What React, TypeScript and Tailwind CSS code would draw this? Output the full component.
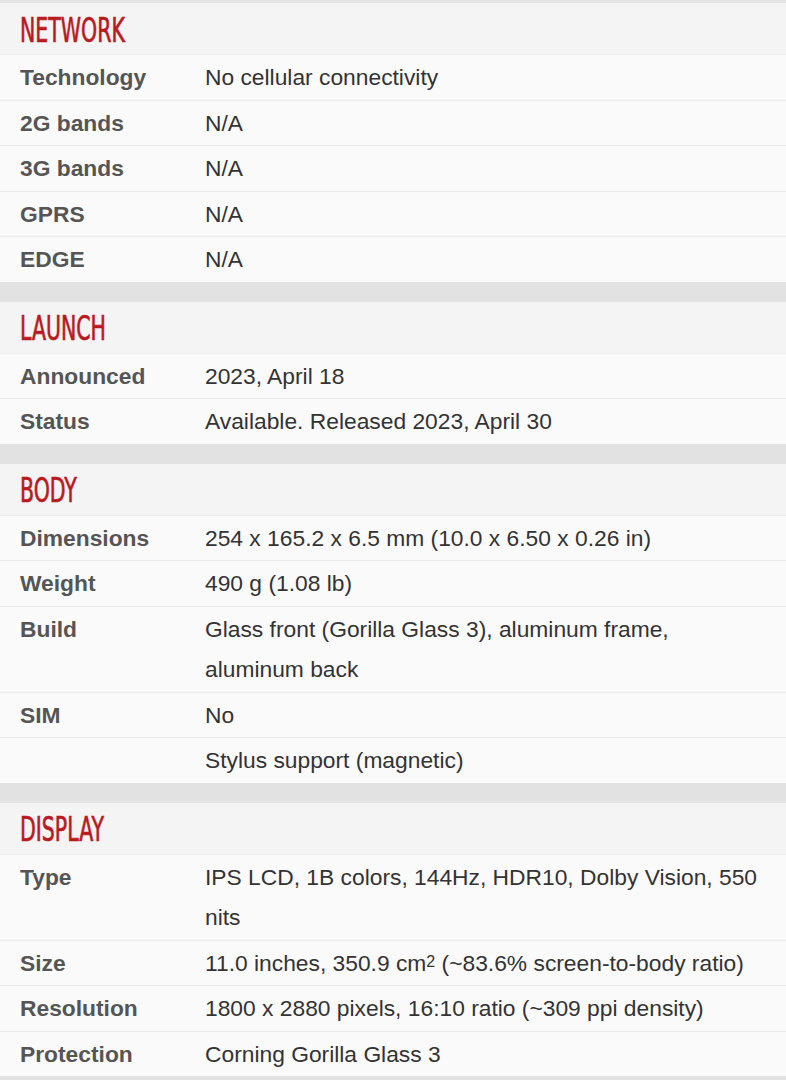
type Row = { label: string; value: React.ReactNode };
type Section = { title: string; rows: Row[] };

const sections: Section[] = [
  {
    title: 'NETWORK',
    rows: [
      { label: 'Technology', value: 'No cellular connectivity' },
      { label: '2G bands', value: 'N/A' },
      { label: '3G bands', value: 'N/A' },
      { label: 'GPRS', value: 'N/A' },
      { label: 'EDGE', value: 'N/A' },
    ],
  },
  {
    title: 'LAUNCH',
    rows: [
      { label: 'Announced', value: '2023, April 18' },
      { label: 'Status', value: 'Available. Released 2023, April 30' },
    ],
  },
  {
    title: 'BODY',
    rows: [
      { label: 'Dimensions', value: '254 x 165.2 x 6.5 mm (10.0 x 6.50 x 0.26 in)' },
      { label: 'Weight', value: '490 g (1.08 lb)' },
      { label: 'Build', value: 'Glass front (Gorilla Glass 3), aluminum frame, aluminum back' },
      { label: 'SIM', value: 'No' },
      { label: '', value: 'Stylus support (magnetic)' },
    ],
  },
  {
    title: 'DISPLAY',
    rows: [
      { label: 'Type', value: 'IPS LCD, 1B colors, 144Hz, HDR10, Dolby Vision, 550 nits' },
      {
        label: 'Size',
        value: (
          <>
            11.0 inches, 350.9 cm<sup className="text-[16px] relative -top-[4px] align-baseline">2</sup> (~83.6% screen-to-body ratio)
          </>
        ),
      },
      { label: 'Resolution', value: '1800 x 2880 pixels, 16:10 ratio (~309 ppi density)' },
      { label: 'Protection', value: 'Corning Gorilla Glass 3' },
    ],
  },
];

export default function App() {
  return (
    <div
      className="w-[786px] min-h-[1080px] bg-[#e2e2e2] pt-[3px]"
      style={{ fontFamily: '"Liberation Sans", Arial, sans-serif' }}
    >
      {sections.map((section) => (
        <div key={section.title} className="pb-[20px]">
          <div className="h-[51px] bg-[#f4f4f4] flex items-center pl-[20px]">
            <h2
              className="text-[34px] leading-none text-[#b81a1f] [-webkit-text-stroke:0.7px_#b81a1f] origin-left scale-x-[0.67] pt-[2px] whitespace-nowrap"
              style={{ fontFamily: '"Liberation Sans Narrow", "DejaVu Sans Condensed", sans-serif' }}
            >
              {section.title}
            </h2>
          </div>
          {section.rows.map((row, i) => (
            <div
              key={i}
              className="flex bg-[#fafafa] border-t border-[#ececec] py-[2px] text-[22.8px] leading-[40.5px]"
            >
              <div className="w-[205px] shrink-0 pl-[20px] font-bold text-[#555555]">{row.label}</div>
              <div className="flex-1 pr-[20px] text-[#333333]">{row.value}</div>
            </div>
          ))}
        </div>
      ))}
    </div>
  );
}
